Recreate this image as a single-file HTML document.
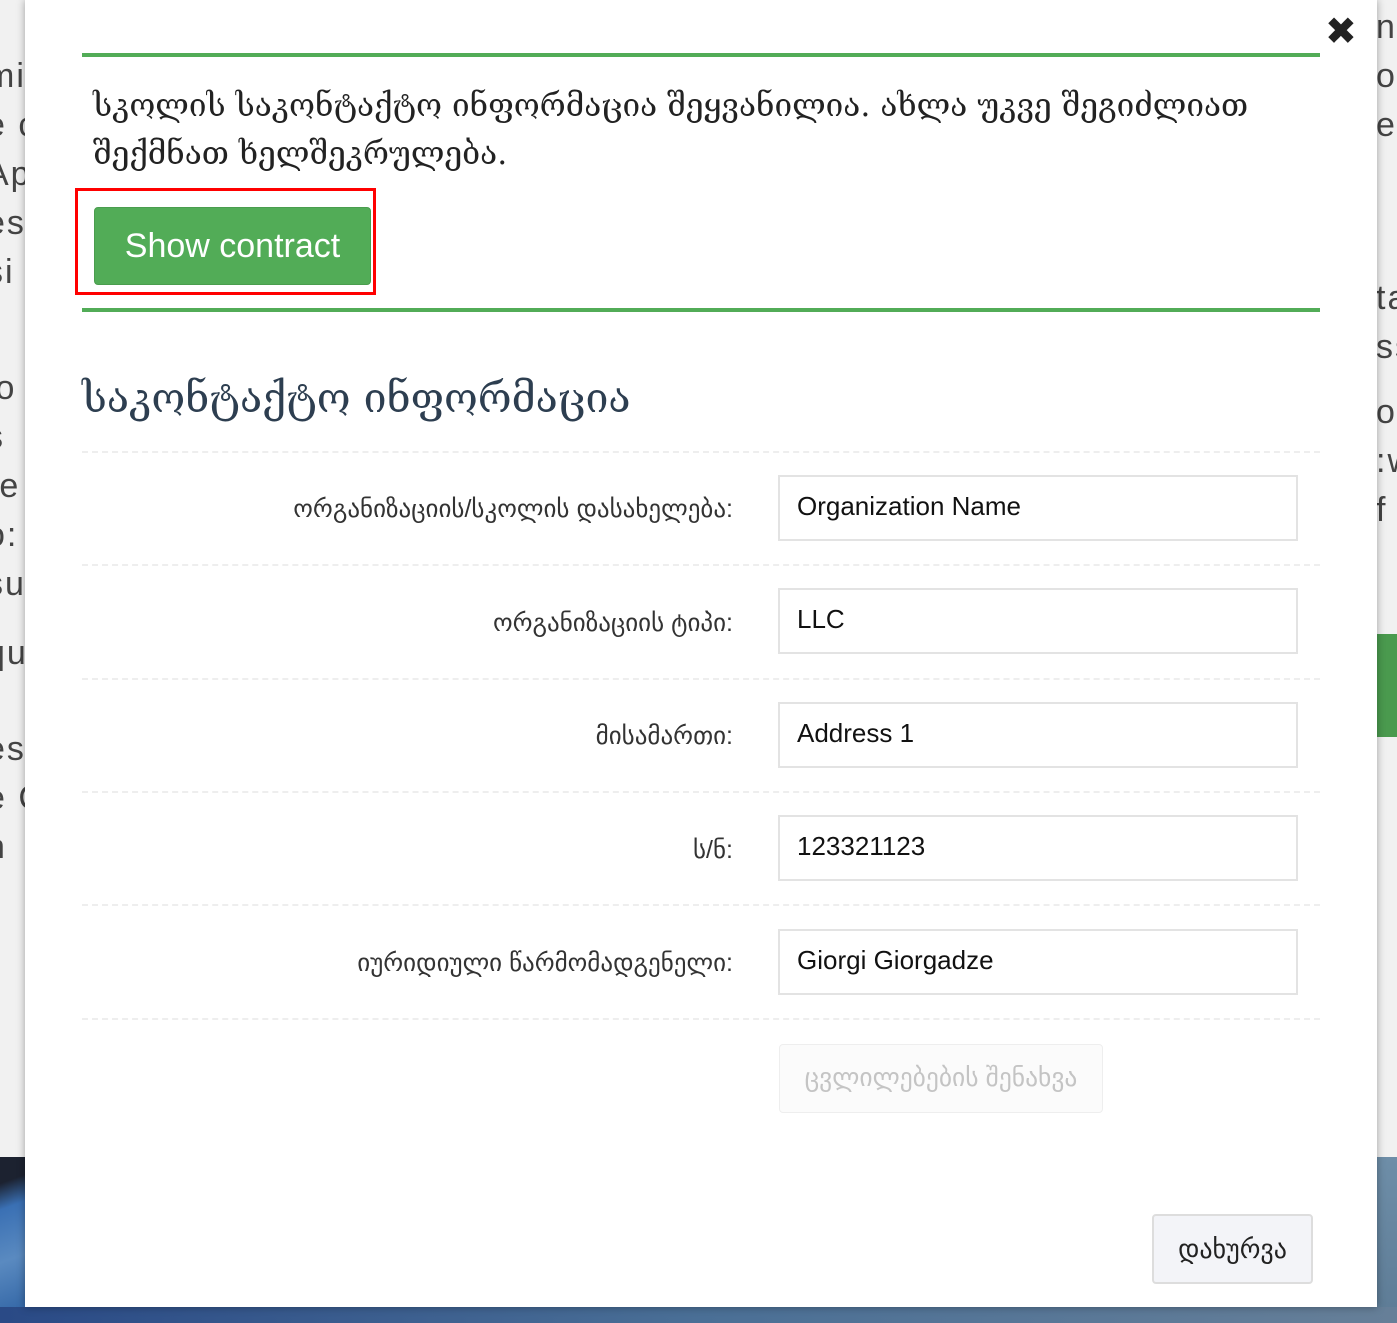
<!DOCTYPE html>
<html><head><meta charset="utf-8"><style>
*{margin:0;padding:0;box-sizing:border-box}
body{width:1397px;height:1323px;position:relative;overflow:hidden;background:#f1f1f1;font-family:"Liberation Sans","DejaVu Sans",sans-serif;color:#333}
.a{position:absolute}
.bgt{font-size:34px;color:#444;letter-spacing:2px;line-height:49px;white-space:nowrap}
#modal{left:25px;top:0;width:1352px;height:1307px;background:#fff;box-shadow:0 0 8px rgba(0,0,0,.35)}
.gl{left:82px;width:1238px;height:4px;background:#52ac57}
.ln{left:82px;width:1238px;border-top:2px dashed #eee}
.lab{right:664px;font-size:25px;color:#333;text-align:right;white-space:nowrap}
.in{left:778px;width:520px;height:66px;border:2px solid #e3e3e3;font-size:26px;color:#111;padding:14px 0 0 17px}
</style></head><body>
<div class="a bgt" style="left:-14px;top:52px">mir<br>e c<br>Ap<br>es<br>si</div>
<div class="a bgt" style="left:-14px;top:364px">io<br>s<br>re<br>o:<br>su</div>
<div class="a bgt" style="left:-14px;top:629px">qu</div>
<div class="a bgt" style="left:-14px;top:725px">es<br>e C<br>n</div>
<div class="a" style="left:0;top:1157px;width:30px;height:166px;background:linear-gradient(160deg,#1c2230 0%,#1c2230 15%,#3a70b4 30%,#5a8ac0 60%,#2a5ea0 100%)"></div>
<div class="a bgt" style="left:1376px;top:3px">ne<br>ol<br>ea</div>
<div class="a bgt" style="left:1376px;top:274px">ta<br>ss</div>
<div class="a bgt" style="left:1376px;top:388px">of<br>:w<br>f</div>
<div class="a" style="left:1377px;top:634px;width:20px;height:103px;background:#4a9a4e"></div>
<div class="a" style="left:1377px;top:1157px;width:20px;height:166px;background:linear-gradient(#6e8ea8,#5d7b95)"></div>
<div class="a" style="left:0;top:1307px;width:1397px;height:16px;background:linear-gradient(90deg,#2a4a86,#4a6f96 50%,#667f98)"></div>

<div class="a" id="modal"></div>
<div class="a" style="left:1325px;top:12px;font-size:38px;font-weight:bold;color:#222;line-height:40px">✖</div>
<div class="a gl" style="top:53px"></div>
<div class="a" style="left:93px;top:82px;font-size:31.5px;line-height:48px;color:#222;font-family:'DejaVu Serif','DejaVu Sans',serif;width:1220px">სკოლის საკონტაქტო ინფორმაცია შეყვანილია. ახლა უკვე შეგიძლიათ შექმნათ ხელშეკრულება.</div>
<div class="a" style="left:75px;top:188px;width:301px;height:107px;border:3px solid #f00"></div>
<div class="a" style="left:94px;top:207px;width:277px;height:78px;background:#52ac57;border:1px solid #4a9d4e;border-radius:4px;color:#fff;font-size:34px;text-align:center;line-height:76px">Show contract</div>
<div class="a gl" style="top:308px"></div>
<div class="a" style="left:82px;top:374px;font-size:41px;color:#2d3e50;font-family:'DejaVu Serif','DejaVu Sans',serif;white-space:nowrap">საკონტაქტო ინფორმაცია</div>
<div class="a ln" style="top:451px"></div>
<div class="a lab" style="top:494px">ორგანიზაციის/სკოლის დასახელება:</div>
<div class="a in" style="top:475px">Organization Name</div>
<div class="a ln" style="top:564px"></div>
<div class="a lab" style="top:608px">ორგანიზაციის ტიპი:</div>
<div class="a in" style="top:588px">LLC</div>
<div class="a ln" style="top:678px"></div>
<div class="a lab" style="top:721px">მისამართი:</div>
<div class="a in" style="top:702px">Address 1</div>
<div class="a ln" style="top:791px"></div>
<div class="a lab" style="top:835px">ს/ნ:</div>
<div class="a in" style="top:815px">123321123</div>
<div class="a ln" style="top:904px"></div>
<div class="a lab" style="top:948px">იურიდიული წარმომადგენელი:</div>
<div class="a in" style="top:929px">Giorgi Giorgadze</div>
<div class="a ln" style="top:1018px"></div>
<div class="a" style="left:779px;top:1044px;width:324px;height:69px;background:#fbfbfb;border:1px solid #eee;border-radius:4px;color:#c4c4c4;font-size:25.5px;text-align:center;line-height:67px">ცვლილებების შენახვა</div>
<div class="a" style="left:1152px;top:1214px;width:161px;height:70px;background:#f3f4f8;border:2px solid #ddd;border-radius:4px;color:#222;font-size:26px;text-align:center;line-height:66px">დახურვა</div>
</body></html>
